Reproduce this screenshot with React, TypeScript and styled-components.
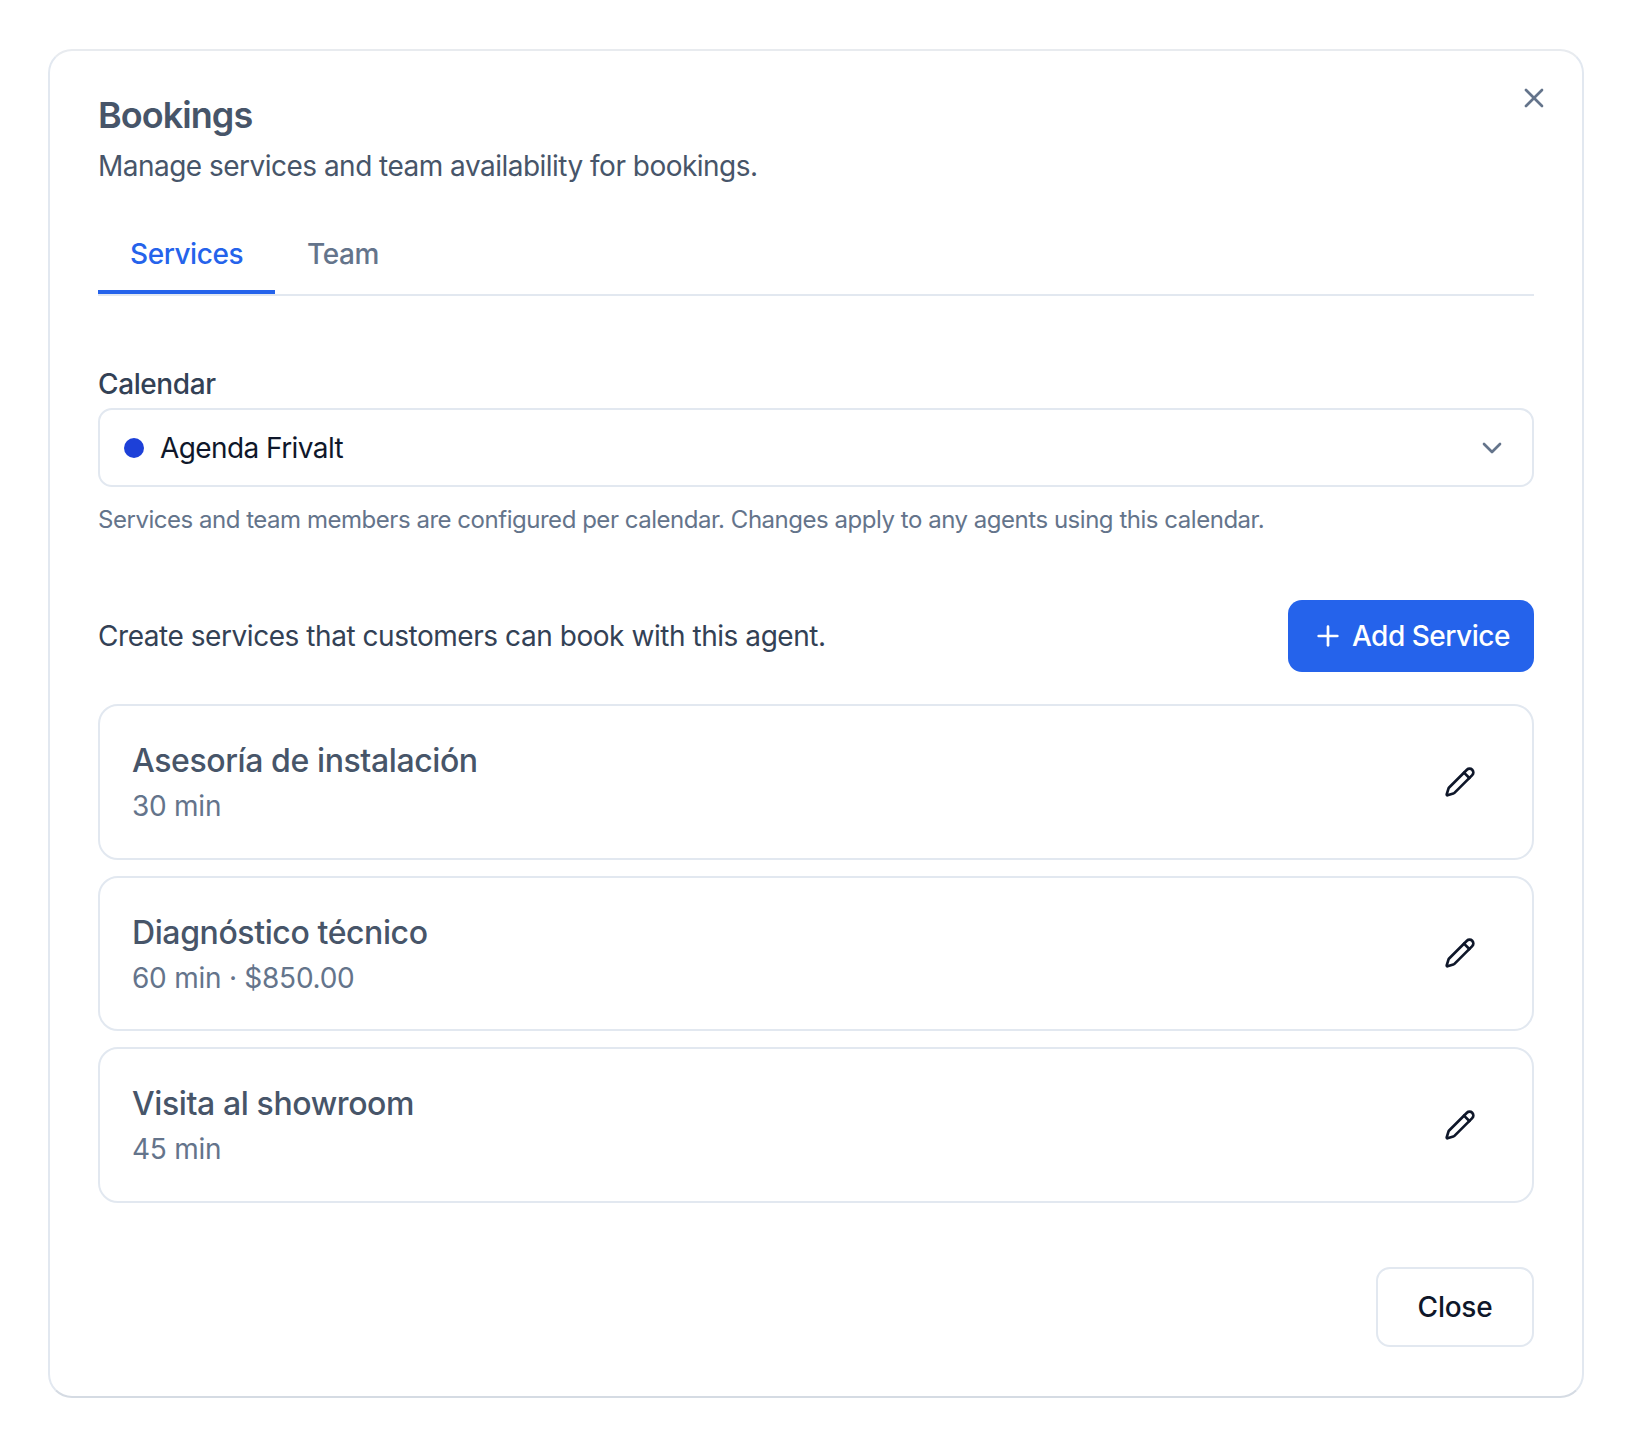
import React from 'react';
import styled, { createGlobalStyle } from 'styled-components';
import { ChevronDown, Pencil, Plus, X } from 'lucide-react';

const GlobalStyle = createGlobalStyle`
  html, body {
    margin: 0;
    padding: 0;
    background: #ffffff;
    font-family: Inter, "Liberation Sans", sans-serif;
  }
`;

const Page = styled.div`
  width: 1632px;
  height: 1446px;
  box-sizing: border-box;
  padding: 49px 48px;
`;

const Panel = styled.div`
  position: relative;
  box-sizing: border-box;
  height: 1349px;
  padding: 48px 48px 0;
  background: #fff;
  border: 2px solid #e2e8f0;
  border-top-color: #e8ebef;
  border-bottom-color: #d5dbe3;
  border-radius: 24px;
`;

const CloseIcon = styled.button`
  position: absolute;
  top: 31px;
  right: 32px;
  display: flex;
  padding: 0;
  border: none;
  background: none;
  color: #64748b;
`;

const Title = styled.h2`
  margin: -2px 0 0;
  font-size: 36px;
  line-height: 36px;
  font-weight: 600;
  letter-spacing: -0.95px;
  color: #475569;
`;

const Description = styled.p`
  margin: 15px 0 0;
  font-size: 28px;
  line-height: 36px;
  letter-spacing: -0.52px;
  color: #475569;
`;

const Tabs = styled.div`
  display: flex;
  margin-top: 41px;
  border-bottom: 2px solid #e2e8f0;
`;

const Tab = styled.div<{ $active?: boolean }>`
  padding: 0 32px 7px;
  height: 69px;
  display: flex;
  align-items: center;
  box-sizing: border-box;
  font-size: 28px;
  font-weight: 500;
  letter-spacing: -0.45px;
  color: ${(p) => (p.$active ? '#2563eb' : '#64748b')};
  border-bottom: 4px solid ${(p) => (p.$active ? '#2563eb' : 'transparent')};
`;

const Label = styled.div`
  margin-top: 68px;
  font-size: 28px;
  line-height: 40px;
  font-weight: 500;
  letter-spacing: -0.4px;
  color: #334155;
`;

const Select = styled.div`
  display: flex;
  align-items: center;
  height: 79px;
  box-sizing: border-box;
  margin-top: 4px;
  padding: 0 24px;
  border: 2px solid #e2e8f0;
  border-radius: 14px;
  font-size: 28px;
  letter-spacing: -0.58px;
  color: #0f172a;
`;

const Dot = styled.span`
  width: 20px;
  height: 20px;
  margin-right: 16px;
  border-radius: 50%;
  background: #1d40d8;
`;

const SelectValue = styled.span`
  flex: 1;
`;

const Chevron = styled(ChevronDown)`
  color: #64748b;
`;

const Hint = styled.p`
  margin: 17px 0 0;
  font-size: 24px;
  line-height: 32px;
  letter-spacing: -0.47px;
  color: #64748b;
`;

const ActionRow = styled.div`
  display: flex;
  align-items: center;
  justify-content: space-between;
  margin-top: 63.5px;
`;

const ActionText = styled.div`
  font-size: 28px;
  letter-spacing: -0.45px;
  color: #334155;
`;

const AddButton = styled.button`
  display: flex;
  align-items: center;
  gap: 8px;
  height: 72px;
  padding: 0 24px;
  border: none;
  border-radius: 14px;
  background: #2563eb;
  color: #fff;
  font: 500 28px Inter, sans-serif;
  letter-spacing: -0.47px;
`;

const List = styled.div`
  display: flex;
  flex-direction: column;
  gap: 16px;
  margin-top: 32.5px;
`;

const Card = styled.div`
  display: flex;
  align-items: center;
  justify-content: space-between;
  height: 155.5px;
  box-sizing: border-box;
  padding: 0 56px 0 32px;
  border: 2px solid #e2e8f0;
  border-radius: 20px;
`;

const CardTitle = styled.div`
  margin-top: 2px;
  font-size: 32px;
  line-height: 44px;
  font-weight: 500;
  letter-spacing: -0.4px;
  color: #475569;
`;

const CardMeta = styled.div`
  margin-top: 3px;
  font-size: 28px;
  line-height: 40px;
  letter-spacing: -0.25px;
  color: #64748b;
`;

const EditIcon = styled(Pencil)`
  color: #0f172a;
`;

const Footer = styled.div`
  display: flex;
  justify-content: flex-end;
  margin-top: 64px;
`;

const CloseButton = styled.button`
  width: 158px;
  height: 80px;
  border: 2px solid #e2e8f0;
  border-radius: 14px;
  background: #fff;
  color: #0f172a;
  font: 500 28px Inter, sans-serif;
  letter-spacing: -0.25px;
`;

const services = [
  { name: 'Asesoría de instalación', meta: '30 min' },
  { name: 'Diagnóstico técnico', meta: '60 min · $850.00' },
  { name: 'Visita al showroom', meta: '45 min' },
];

const App = () => (
  <Page>
    <GlobalStyle />
    <Panel>
      <CloseIcon>
        <X size={32} />
      </CloseIcon>
      <Title>Bookings</Title>
      <Description>Manage services and team availability for bookings.</Description>
      <Tabs>
        <Tab $active>Services</Tab>
        <Tab>Team</Tab>
      </Tabs>
      <Label>Calendar</Label>
      <Select>
        <Dot />
        <SelectValue>Agenda Frivalt</SelectValue>
        <Chevron size={32} />
      </Select>
      <Hint>Services and team members are configured per calendar. Changes apply to any agents using this calendar.</Hint>
      <ActionRow>
        <ActionText>Create services that customers can book with this agent.</ActionText>
        <AddButton>
          <Plus size={32} />
          Add Service
        </AddButton>
      </ActionRow>
      <List>
        {services.map((s) => (
          <Card key={s.name}>
            <div>
              <CardTitle>{s.name}</CardTitle>
              <CardMeta>{s.meta}</CardMeta>
            </div>
            <EditIcon size={32} />
          </Card>
        ))}
      </List>
      <Footer>
        <CloseButton>Close</CloseButton>
      </Footer>
    </Panel>
  </Page>
);

export default App;
